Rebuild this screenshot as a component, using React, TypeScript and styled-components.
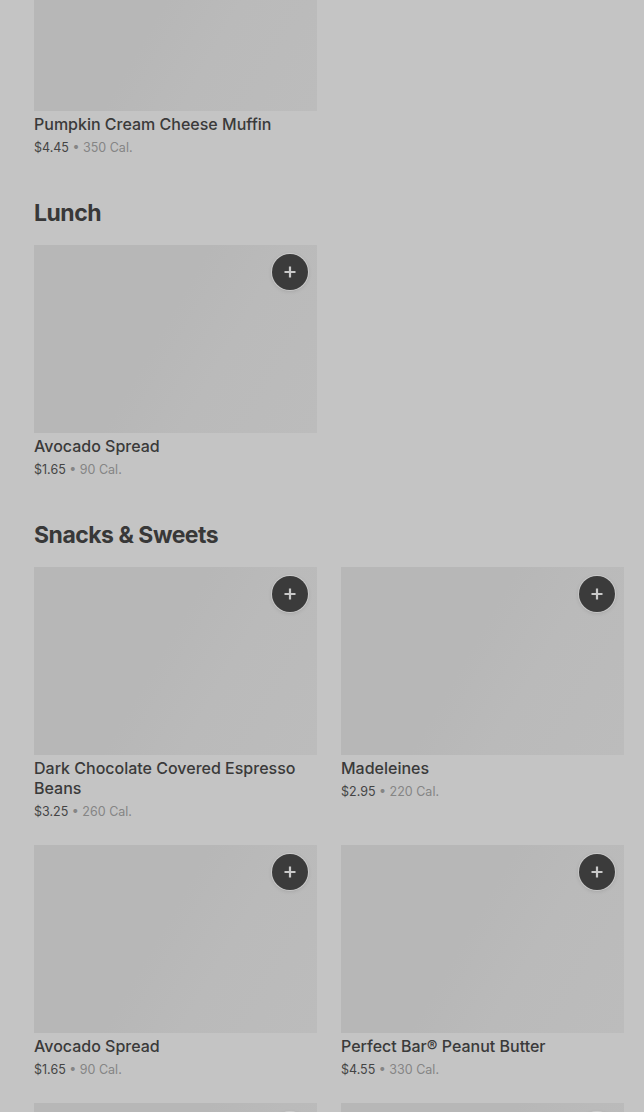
import styled, { createGlobalStyle } from 'styled-components';

const GlobalStyle = createGlobalStyle`
  html, body {
    margin: 0;
    padding: 0;
    background: #c4c4c4;
    font-family: Inter, "Liberation Sans", Arial, sans-serif;
    overflow: hidden;
  }
`;

type Item = { name: string; price: string; cal: string; add?: boolean };
type Section = { title?: string; items: Item[] };

const sections: Section[] = [
  { items: [{ name: 'Pumpkin Cream Cheese Muffin', price: '$4.45', cal: '350 Cal.' }] },
  { title: 'Lunch', items: [{ name: 'Avocado Spread', price: '$1.65', cal: '90 Cal.', add: true }] },
  {
    title: 'Snacks & Sweets',
    items: [
      { name: 'Dark Chocolate Covered Espresso Beans', price: '$3.25', cal: '260 Cal.', add: true },
      { name: 'Madeleines', price: '$2.95', cal: '220 Cal.', add: true },
      { name: 'Avocado Spread', price: '$1.65', cal: '90 Cal.', add: true },
      { name: 'Perfect Bar® Peanut Butter', price: '$4.55', cal: '330 Cal.', add: true },
      { name: '', price: '', cal: '', add: true },
      { name: '', price: '', cal: '', add: true },
    ],
  },
];

const Page = styled.main`
  padding: 0 20px 0 34px;
  margin-top: -77px;
  display: flex;
  flex-direction: column;
  gap: 38px;
`;

const Block = styled.section`
  display: flex;
  flex-direction: column;
  gap: 15px;
`;

const Heading = styled.h2`
  margin: 0;
  font-size: 23px;
  line-height: 34px;
  font-weight: 700;
  color: #383838;
  letter-spacing: -0.5px;
`;

const Grid = styled.div`
  display: grid;
  grid-template-columns: 283px 283px;
  column-gap: 24px;
  row-gap: 23px;
`;

const Card = styled.div`
  display: flex;
  flex-direction: column;
`;

const Thumb = styled.div`
  position: relative;
  height: 188px;
  background: linear-gradient(
    120deg,
    #b7b7b7 0%,
    #b7b7b7 45%,
    #bababa 65%,
    #bcbcbc 100%
  );
`;

const AddButton = styled.button`
  position: absolute;
  top: 9px;
  right: 9px;
  width: 36px;
  height: 36px;
  border: 0;
  padding: 0;
  border-radius: 50%;
  background: #3b3b3b;
  box-shadow: 0 0 0 1px rgba(220, 220, 220, 0.6), 0 1px 4px rgba(0, 0, 0, 0.15);
  display: flex;
  align-items: center;
  justify-content: center;
`;

const Name = styled.div`
  margin-top: 3px;
  font-size: 16px;
  line-height: 20px;
  font-weight: 500;
  color: #3a3a3a;
`;

const Meta = styled.div`
  margin-top: 4px;
  font-size: 12.5px;
  line-height: 20px;
  color: #858585;
`;

const Price = styled.span`
  color: #444444;
`;

const Plus = () => (
  <svg width="14" height="14" viewBox="0 0 14 14">
    <path d="M7 1.5v11M1.5 7h11" stroke="#c9c9c9" strokeWidth="2.2" />
  </svg>
);

export default function App() {
  return (
    <>
      <GlobalStyle />
      <Page>
        {sections.map((s, i) => (
          <Block key={i}>
            {s.title && <Heading>{s.title}</Heading>}
            <Grid>
              {s.items.map((it, j) => (
                <Card key={j}>
                  <Thumb>
                    {it.add && (
                      <AddButton aria-label="Add">
                        <Plus />
                      </AddButton>
                    )}
                  </Thumb>
                  {it.name && <Name>{it.name}</Name>}
                  {it.price && (
                    <Meta>
                      <Price>{it.price}</Price> • {it.cal}
                    </Meta>
                  )}
                </Card>
              ))}
            </Grid>
          </Block>
        ))}
      </Page>
    </>
  );
}
